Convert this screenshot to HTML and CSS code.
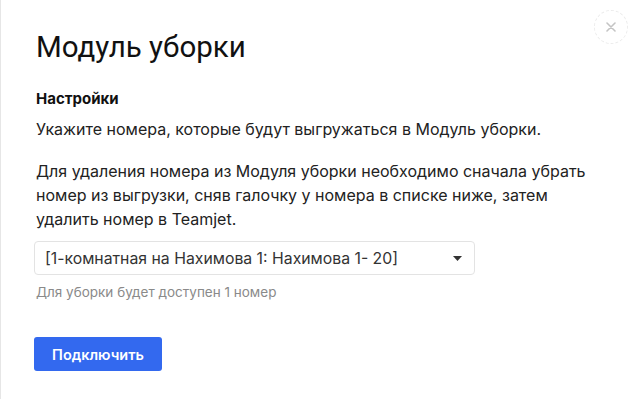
FILE: index.html
```html
<!DOCTYPE html>
<html lang="ru">
<head>
<meta charset="utf-8">
<link rel="stylesheet" href="styles.css">
</head>
<body>
<div class="modal">
  <button class="close" aria-label="Закрыть">
    <svg width="10" height="10" viewBox="0 0 10 10"><path d="M1 1L9 9M9 1L1 9" stroke="#c4c4c4" stroke-width="1.6" stroke-linecap="round"/></svg>
  </button>
  <h1 class="title">Модуль уборки</h1>
  <h2 class="subtitle">Настройки</h2>
  <p class="text">Укажите номера, которые будут выгружаться в Модуль уборки.</p>
  <p class="text second">Для удаления номера из Модуля уборки необходимо сначала убрать номер из выгрузки, сняв галочку у номера в списке ниже, затем удалить номер в Teamjet.</p>
  <div class="select">
    <span class="select-value">[1-комнатная на Нахимова 1: Нахимова 1- 20]</span>
    <svg class="caret" width="9" height="5" viewBox="0 0 9 5"><path d="M0 0H9L4.5 5Z" fill="#333"/></svg>
  </div>
  <div class="hint">Для уборки будет доступен 1 номер</div>
  <button class="primary">Подключить</button>
</div>
</body>
</html>
```

FILE: styles.css
```css
html, body {
  margin: 0;
  padding: 0;
  background: #fff;
}
body {
  font-family: Inter, "Noto Sans", sans-serif;
  color: #1a1a1a;
  width: 642px;
  height: 399px;
  overflow: hidden;
}
.modal {
  position: relative;
  box-sizing: border-box;
  height: 399px;
  border-left: 1px solid #e6e6e6;
  padding: 30px 0 0 35px;
  display: flex;
  flex-direction: column;
  align-items: flex-start;
}
.close {
  position: absolute;
  top: 10px;
  right: 14px;
  width: 34px;
  height: 34px;
  border-radius: 50%;
  border: 1px dashed #ececec;
  background: #fff;
  padding: 0;
  display: flex;
  align-items: center;
  justify-content: center;
}
.title {
  margin: 0;
  font-family: Roboto, sans-serif;
  font-weight: 400;
  font-size: 29.5px;
  line-height: 34px;
  color: #111;
}
.subtitle {
  margin: 25px 0 0;
  font-size: 15px;
  font-weight: 700;
  line-height: 20px;
  color: #111;
}
.text {
  margin: 8px 0 0;
  font-size: 16px;
  line-height: 24px;
  color: #222;
  max-width: 572px;
}
.text.second {
  margin-top: 18px;
}
.select {
  margin-top: 10px;
  margin-left: -2px;
  box-sizing: border-box;
  width: 441px;
  height: 34px;
  border: 1px solid #e3e3e3;
  border-radius: 4px;
  display: flex;
  align-items: center;
  justify-content: space-between;
  padding: 0 12px 0 10px;
}
.select-value {
  font-size: 15.8px;
  color: #333;
}
.hint {
  margin-top: 9px;
  font-size: 13.5px;
  line-height: 16px;
  color: #8a8a8a;
}
.primary {
  margin-top: 37px;
  margin-left: -2px;
  width: 128px;
  height: 34px;
  border: none;
  border-radius: 3px;
  background: #3369ef;
  color: #fff;
  font-family: Inter, sans-serif;
  font-weight: 600;
  font-size: 14.5px;
  padding: 0;
}
```
